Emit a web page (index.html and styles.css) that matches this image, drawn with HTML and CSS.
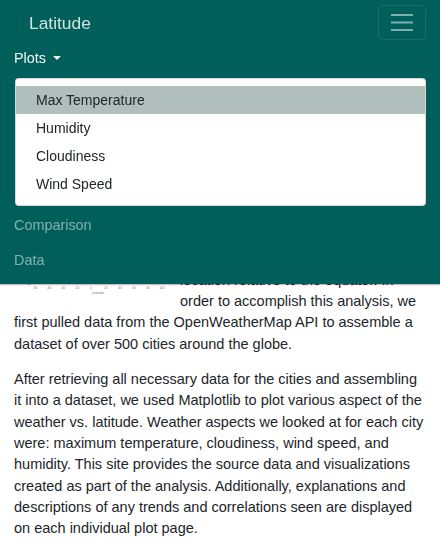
FILE: index.html
```html
<!DOCTYPE html>
<html lang="en">
<head>
<meta charset="utf-8">
<title>Latitude</title>
<link rel="stylesheet" href="styles.css">
</head>
<body>
<nav class="navbar">
  <div class="navbar-top">
    <a class="brand" href="#">Latitude</a>
    <button class="toggler" type="button" aria-label="Toggle navigation">
      <svg width="22" height="17" viewBox="0 0 22 17"><path d="M0 1H22M0 8.5H22M0 16H22" stroke="rgba(255,255,255,0.5)" stroke-width="2"/></svg>
    </button>
  </div>
  <ul class="nav">
    <li class="nav-item">
      <a class="nav-link open" href="#">Plots<span class="caret"></span></a>
      <div class="dropdown-menu">
        <a class="dropdown-item active" href="#">Max Temperature</a>
        <a class="dropdown-item" href="#">Humidity</a>
        <a class="dropdown-item" href="#">Cloudiness</a>
        <a class="dropdown-item" href="#">Wind Speed</a>
      </div>
    </li>
    <li class="nav-item"><a class="nav-link" href="#">Comparison</a></li>
    <li class="nav-item"><a class="nav-link" href="#">Data</a></li>
  </ul>
</nav>
<main class="content">
  <h1 class="title">Latitude Analysis</h1>
  <h2 class="subtitle">Summary</h2>
  <p class="text">
    <svg class="plot" width="156" height="91" viewBox="0 0 156 91">
      <rect x="19" y="2" width="133" height="72" fill="#fff" stroke="#333" stroke-width="0.5"/>
      <g fill="#4a7fb0">
        <circle cx="30" cy="50" r="1"/><circle cx="45" cy="40" r="1"/><circle cx="60" cy="30" r="1"/>
        <circle cx="75" cy="18" r="1"/><circle cx="90" cy="14" r="1"/><circle cx="105" cy="20" r="1"/>
        <circle cx="120" cy="33" r="1"/><circle cx="135" cy="52" r="1"/><circle cx="100" cy="24" r="1"/>
      </g>
      <g class="tick" font-size="3" fill="#777" text-anchor="middle">
        <text x="17" y="79" text-anchor="end">-20</text>
        <text x="21" y="83">-80</text>
        <text x="35" y="83">-60</text>
        <text x="49" y="83">-40</text>
        <text x="63" y="83">-20</text>
        <text x="77" y="83">0</text>
        <text x="92" y="83">20</text>
        <text x="106" y="83">40</text>
        <text x="120" y="83">60</text>
        <text x="134" y="83">80</text>
        <text x="148" y="83">100</text>
        <text x="84" y="87.5" font-size="3.4">Latitude</text>
      </g>
    </svg>
    The goal of this analysis was to determine how different aspects of the weather change based on a city's location relative to the equator. In order to accomplish this analysis, we first pulled data from the OpenWeatherMap API to assemble a dataset of over 500 cities around the globe.
  </p>
  <p class="text">After retrieving all necessary data for the cities and assembling it into a dataset, we used Matplotlib to plot various aspect of the weather vs. latitude. Weather aspects we looked at for each city were: maximum temperature, cloudiness, wind speed, and humidity. This site provides the source data and visualizations created as part of the analysis. Additionally, explanations and descriptions of any trends and correlations seen are displayed on each individual plot page.</p>
</main>
</body>
</html>
```
FILE: styles.css
```css
* {
  box-sizing: border-box;
}

body {
  margin: 0;
  background: #fff;
  font-family: "Liberation Sans", Arial, sans-serif;
  color: #212529;
}

a {
  text-decoration: none;
}

.navbar {
  position: fixed;
  top: 0;
  left: 0;
  right: 0;
  z-index: 10;
  background: #005f5b;
  padding: 5px 14px 6px;
  box-shadow: 0 1px 1px rgba(0, 0, 0, 0.25);
}

.navbar-top {
  display: flex;
  align-items: center;
  justify-content: space-between;
  height: 35px;
}

.brand {
  margin-left: 15px;
  font-size: 17.4px;
  line-height: 26px;
  color: #d0e2de;
}

.toggler {
  width: 48px;
  height: 35px;
  padding: 0;
  background: transparent;
  border: 1px solid rgba(255, 255, 255, 0.1);
  border-radius: 5px;
  display: flex;
  align-items: center;
  justify-content: center;
}

.toggler svg {
  display: block;
}

.nav {
  list-style: none;
  margin: 0;
  padding: 0;
}

.nav-link {
  display: flex;
  align-items: center;
  height: 35px;
  font-size: 14.4px;
  line-height: 21px;
  color: rgba(255, 255, 255, 0.5);
}

.nav-link.open {
  color: #f2f7f6;
  padding-top: 1px;
}

.caret {
  margin-left: 7px;
  width: 0;
  height: 0;
  border-top: 4.5px solid #f2f7f6;
  border-left: 4.5px solid transparent;
  border-right: 4.5px solid transparent;
}

.dropdown-menu {
  margin: 3px 0 1.5px 1px;
  background: #fff;
  border: 1px solid rgba(0, 0, 0, 0.15);
  border-radius: 4px;
  padding: 7px 0;
}

.dropdown-item {
  display: block;
  height: 28px;
  padding: 3.5px 20px;
  font-size: 14px;
  line-height: 21px;
  color: #212529;
}

.dropdown-item.active {
  background: #b0bfbc;
}

.content {
  padding: 113px 14px 20px;
}

.title {
  margin: 0 0 14px;
  font-size: 30px;
  line-height: 36px;
  font-weight: 500;
}

.subtitle {
  margin: 0 0 14px;
  font-size: 24px;
  line-height: 29px;
  font-weight: 500;
}

.text {
  margin: 0 0 14px;
  font-size: 14.5px;
  line-height: 21.3px;
}

.plot {
  float: left;
  margin: 0 10px 8px 0;
}

.tick text {
  font-family: "Liberation Sans", Arial, sans-serif;
}
```
